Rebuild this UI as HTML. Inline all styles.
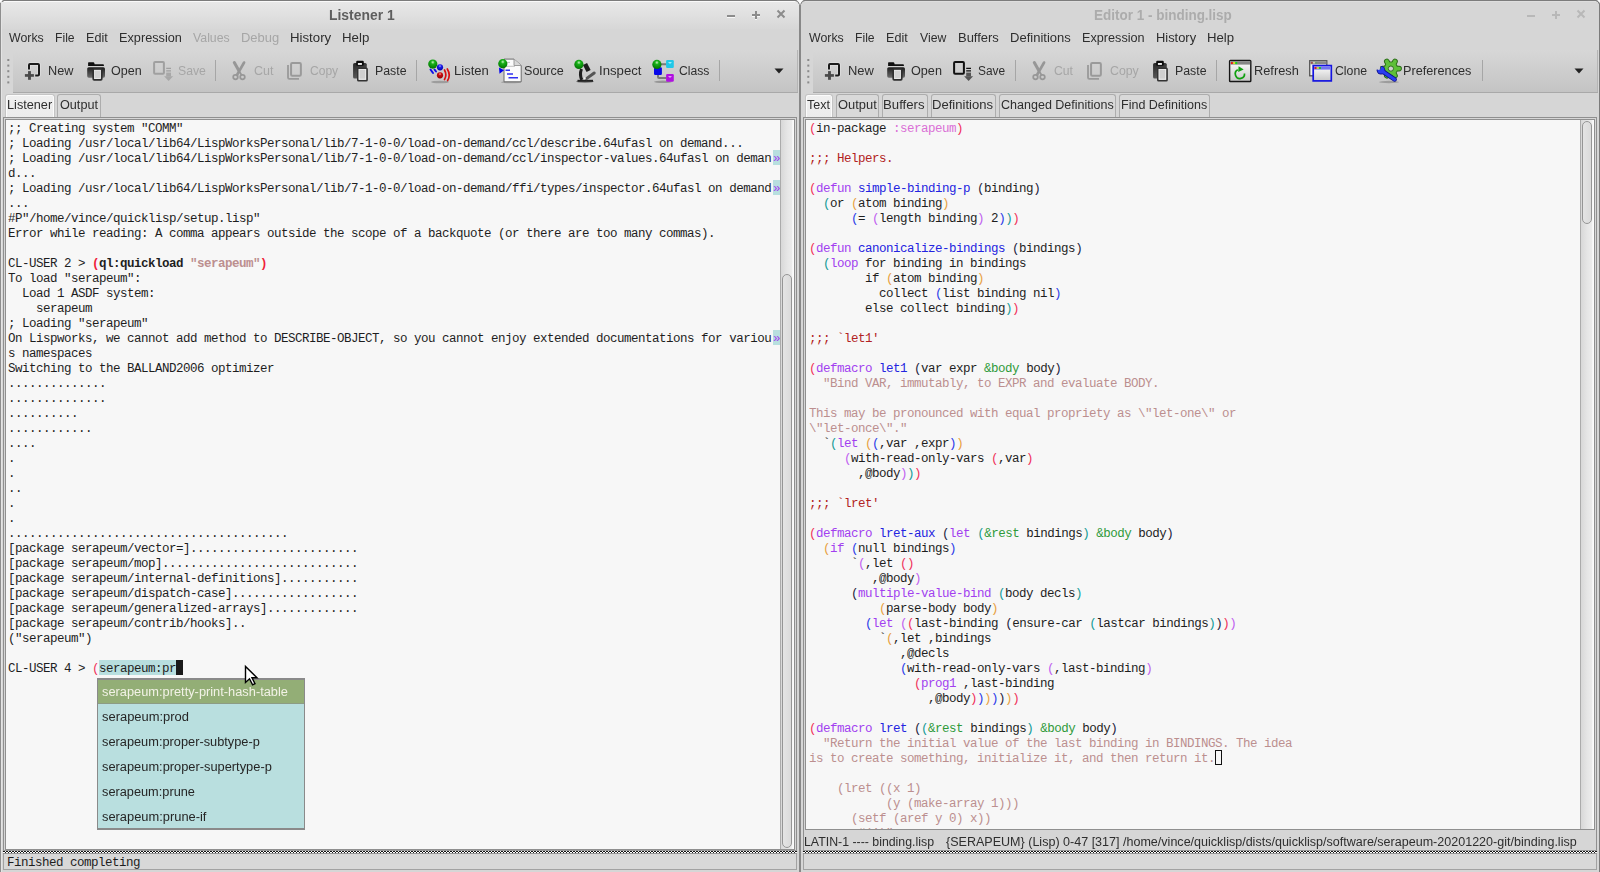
<!DOCTYPE html><html><head><meta charset="utf-8"><style>
html,body{margin:0;padding:0;width:1600px;height:872px;overflow:hidden;background:#d6d6d6;position:relative}
.abs,.ui,.tab,.code,.checker,.more,svg{position:absolute}
.ui{font-family:"Liberation Sans",sans-serif;white-space:pre;transform-origin:0 0}
.tab{top:94px;height:23.5px;box-sizing:border-box;border:1px solid #adadad;border-bottom:none;border-radius:3px 3px 0 0;background:#d9d9d9}
.tab.act{background:linear-gradient(#f0f0f0,#ebebeb);border-color:#c4c4c4;box-shadow:inset 1px 1px 0 #fbfbfb,inset -1px 0 0 #fbfbfb}
.code,.more{font-family:"Liberation Mono",monospace;font-size:12.5px;letter-spacing:-0.5px;line-height:15px;white-space:pre;color:#1e1e1e;overflow:hidden}
.more{color:#a040f0}
.checker{top:851px;height:2px;background:repeating-linear-gradient(90deg,#111 0 2px,#fff 2px 3px) 0 0/100% 1px no-repeat,repeating-linear-gradient(90deg,#fff 0 2px,#111 2px 3px) 0 1px/100% 1px no-repeat}
</style></head><body>
<div class="abs" style="left:0px;top:0px;width:1600px;height:872px;background:#d6d6d6;"></div>
<div class="abs" style="left:1px;top:1px;width:798px;height:28px;background:linear-gradient(#e9e9e9,#d7d7d7);"></div>
<div class="abs" style="left:1px;top:1px;width:797px;height:1px;background:#fafafa;"></div>
<div class="abs" style="left:801px;top:1px;width:798px;height:1px;background:#dedede;"></div>
<div class="abs" style="left:0px;top:0px;width:1600px;height:1px;background:#7c7c7c;"></div>
<div class="abs" style="left:0px;top:0px;width:1px;height:872px;background:#8e8e8e;"></div>
<div class="abs" style="left:799px;top:0px;width:2px;height:872px;background:#888888;"></div>
<div class="abs" style="left:1599px;top:0px;width:1px;height:872px;background:#7c7c7c;"></div>
<svg width="12" height="6" style="left:794px;top:0" viewBox="0 0 12 6"><path d="M1 0 Q4.6 0.3 5 4.2 H7 Q7.4 0.3 11 0 Z" fill="#fcfcfc"/><path d="M1 0.5 Q4.3 0.7 5.2 4 M6.8 4 Q7.7 0.7 11 0.5" fill="none" stroke="#7a7a7a" stroke-width="1"/></svg>
<svg width="6" height="6" style="left:0;top:0" viewBox="0 0 6 6"><path d="M0 0 H4 Q1 0.6 0 4 Z" fill="#fcfcfc"/><path d="M4.2 0.6 Q1.4 1 0.7 4" fill="none" stroke="#7a7a7a" stroke-width="1"/></svg>
<svg width="6" height="6" style="left:1594px;top:0" viewBox="0 0 6 6"><path d="M6 0 H2 Q5 0.6 6 4 Z" fill="#fcfcfc"/><path d="M1.8 0.6 Q4.6 1 5.3 4" fill="none" stroke="#7a7a7a" stroke-width="1"/></svg>
<div class="abs" style="left:1px;top:2px;width:1px;height:870px;background:#e4e4e4;"></div>
<div class="ui" style="left:328.71px;top:5.05px;font-size:14px;line-height:20px;color:#5e5e5e;transform:scaleX(0.9923);font-weight:bold;">Listener 1</div>
<div class="ui" style="left:1093.53px;top:5.05px;font-size:14px;line-height:20px;color:#acacac;transform:scaleX(0.9633);font-weight:bold;">Editor 1 - binding.lisp</div>
<svg width="70" height="30" style="left:722px;top:0" viewBox="0 0 70 30"><g fill="#fff" opacity="0.8" transform="translate(0,1)"><rect x="5" y="15" width="8" height="2"/><rect x="30" y="14" width="8" height="2"/><rect x="33" y="11" width="2" height="8"/></g><g fill="#8c8c8c"><rect x="5" y="15" width="8" height="2"/><rect x="30" y="14" width="8" height="2"/><rect x="33" y="11" width="2" height="8"/></g><g stroke="#8c8c8c" stroke-width="2"><path d="M55.5 10.5 L62.5 17.5 M62.5 10.5 L55.5 17.5"/></g></svg>
<svg width="70" height="30" style="left:1522px;top:0" viewBox="0 0 70 30"><g fill="#b8b8b8"><rect x="5" y="15" width="8" height="2"/><rect x="30" y="14" width="8" height="2"/><rect x="33" y="11" width="2" height="8"/></g><g stroke="#b8b8b8" stroke-width="2"><path d="M55.5 10.5 L62.5 17.5 M62.5 10.5 L55.5 17.5"/></g></svg>
<div class="ui" style="left:8.75px;top:28.44px;font-size:12px;line-height:20px;color:#2e2e2e;transform:scaleX(1.0284);">Works</div>
<div class="ui" style="left:55.24px;top:28.44px;font-size:12px;line-height:20px;color:#2e2e2e;transform:scaleX(1.0140);">File</div>
<div class="ui" style="left:86.45px;top:28.44px;font-size:12px;line-height:20px;color:#2e2e2e;transform:scaleX(1.0510);">Edit</div>
<div class="ui" style="left:119.19px;top:28.44px;font-size:12px;line-height:20px;color:#2e2e2e;transform:scaleX(1.0590);">Expression</div>
<div class="ui" style="left:193.10px;top:28.44px;font-size:12px;line-height:20px;color:#a6a6a6;transform:scaleX(1.0254);">Values</div>
<div class="ui" style="left:241.42px;top:28.44px;font-size:12px;line-height:20px;color:#a6a6a6;transform:scaleX(1.0789);">Debug</div>
<div class="ui" style="left:290.15px;top:28.44px;font-size:12px;line-height:20px;color:#2e2e2e;transform:scaleX(1.1019);">History</div>
<div class="ui" style="left:341.99px;top:28.44px;font-size:12px;line-height:20px;color:#2e2e2e;transform:scaleX(1.1056);">Help</div>
<div class="ui" style="left:808.75px;top:28.44px;font-size:12px;line-height:20px;color:#2e2e2e;transform:scaleX(1.0284);">Works</div>
<div class="ui" style="left:855.24px;top:28.44px;font-size:12px;line-height:20px;color:#2e2e2e;transform:scaleX(1.0140);">File</div>
<div class="ui" style="left:886.45px;top:28.44px;font-size:12px;line-height:20px;color:#2e2e2e;transform:scaleX(1.0510);">Edit</div>
<div class="ui" style="left:920.00px;top:28.44px;font-size:12px;line-height:20px;color:#2e2e2e;transform:scaleX(1.0174);">View</div>
<div class="ui" style="left:957.67px;top:28.44px;font-size:12px;line-height:20px;color:#2e2e2e;transform:scaleX(1.0810);">Buffers</div>
<div class="ui" style="left:1010.16px;top:28.44px;font-size:12px;line-height:20px;color:#2e2e2e;transform:scaleX(1.0852);">Definitions</div>
<div class="ui" style="left:1082.20px;top:28.44px;font-size:12px;line-height:20px;color:#2e2e2e;transform:scaleX(1.0547);">Expression</div>
<div class="ui" style="left:1155.68px;top:28.44px;font-size:12px;line-height:20px;color:#2e2e2e;transform:scaleX(1.0744);">History</div>
<div class="ui" style="left:1207.40px;top:28.44px;font-size:12px;line-height:20px;color:#2e2e2e;transform:scaleX(1.0991);">Help</div>
<div class="abs" style="left:13px;top:50px;width:785px;height:42px;background:linear-gradient(#d7d7d7,#c4c4c4);"></div>
<div class="abs" style="left:13px;top:92px;width:785px;height:1px;background:#a9a9a9;"></div>
<div class="abs" style="left:797px;top:50px;width:1px;height:42px;background:#b5b5b5;"></div>
<svg width="4" height="30" style="left:7px;top:58px"><rect x="0.3" y="1.0" width="2" height="2" fill="#8a8a8a"/><rect x="0.3" y="6.6" width="2" height="2" fill="#8a8a8a"/><rect x="0.3" y="12.2" width="2" height="2" fill="#8a8a8a"/><rect x="0.3" y="17.799999999999997" width="2" height="2" fill="#8a8a8a"/><rect x="0.3" y="23.4" width="2" height="2" fill="#8a8a8a"/></svg>
<div class="abs" style="left:813px;top:50px;width:785px;height:42px;background:linear-gradient(#d7d7d7,#c4c4c4);"></div>
<div class="abs" style="left:813px;top:92px;width:785px;height:1px;background:#a9a9a9;"></div>
<div class="abs" style="left:1597px;top:50px;width:1px;height:42px;background:#b5b5b5;"></div>
<svg width="4" height="30" style="left:807px;top:58px"><rect x="0.3" y="1.0" width="2" height="2" fill="#8a8a8a"/><rect x="0.3" y="6.6" width="2" height="2" fill="#8a8a8a"/><rect x="0.3" y="12.2" width="2" height="2" fill="#8a8a8a"/><rect x="0.3" y="17.799999999999997" width="2" height="2" fill="#8a8a8a"/><rect x="0.3" y="23.4" width="2" height="2" fill="#8a8a8a"/></svg>
<div class="ui" style="left:48.34px;top:60.74px;font-size:12px;line-height:20px;color:#2e2e2e;transform:scaleX(1.0587);">New</div>
<div class="ui" style="left:110.73px;top:60.74px;font-size:12px;line-height:20px;color:#2e2e2e;transform:scaleX(1.0445);">Open</div>
<div class="ui" style="left:177.59px;top:60.74px;font-size:12px;line-height:20px;color:#a6a6a6;transform:scaleX(1.0189);">Save</div>
<div class="ui" style="left:253.78px;top:60.74px;font-size:12px;line-height:20px;color:#a6a6a6;transform:scaleX(1.0389);">Cut</div>
<div class="ui" style="left:310.00px;top:60.74px;font-size:12px;line-height:20px;color:#a6a6a6;transform:scaleX(1.0036);">Copy</div>
<div class="ui" style="left:374.57px;top:60.74px;font-size:12px;line-height:20px;color:#2e2e2e;transform:scaleX(1.0274);">Paste</div>
<div class="ui" style="left:454.16px;top:60.74px;font-size:12px;line-height:20px;color:#2e2e2e;transform:scaleX(1.0877);">Listen</div>
<div class="ui" style="left:524.48px;top:60.74px;font-size:12px;line-height:20px;color:#2e2e2e;transform:scaleX(1.0473);">Source</div>
<div class="ui" style="left:599.39px;top:60.74px;font-size:12px;line-height:20px;color:#2e2e2e;transform:scaleX(1.0984);">Inspect</div>
<div class="ui" style="left:678.79px;top:60.74px;font-size:12px;line-height:20px;color:#2e2e2e;transform:scaleX(1.0121);">Class</div>
<div class="ui" style="left:848.42px;top:60.74px;font-size:12px;line-height:20px;color:#2e2e2e;transform:scaleX(1.0783);">New</div>
<div class="ui" style="left:910.87px;top:60.74px;font-size:12px;line-height:20px;color:#2e2e2e;transform:scaleX(1.0534);">Open</div>
<div class="ui" style="left:977.60px;top:60.74px;font-size:12px;line-height:20px;color:#2e2e2e;transform:scaleX(0.9924);">Save</div>
<div class="ui" style="left:1053.69px;top:60.74px;font-size:12px;line-height:20px;color:#a6a6a6;transform:scaleX(1.0167);">Cut</div>
<div class="ui" style="left:1109.58px;top:60.74px;font-size:12px;line-height:20px;color:#a6a6a6;transform:scaleX(1.0255);">Copy</div>
<div class="ui" style="left:1174.57px;top:60.74px;font-size:12px;line-height:20px;color:#2e2e2e;transform:scaleX(1.0274);">Paste</div>
<div class="ui" style="left:1254.18px;top:60.74px;font-size:12px;line-height:20px;color:#2e2e2e;transform:scaleX(1.0659);">Refresh</div>
<div class="ui" style="left:1334.64px;top:60.74px;font-size:12px;line-height:20px;color:#2e2e2e;transform:scaleX(1.0231);">Clone</div>
<div class="ui" style="left:1403.44px;top:60.74px;font-size:12px;line-height:20px;color:#2e2e2e;transform:scaleX(1.0569);">Preferences</div>
<svg width="28" height="26" style="left:20px;top:58px" viewBox="0 0 28 26"><path d="M9 11.5 V7 Q9 6 10 6 H18 Q19 6 19 7 V16.6 Q19 17.6 18 17.6 H15.2" fill="none" stroke="#e8e8e8" stroke-width="3.6" opacity="0.6"/><path d="M9 11.5 V7 Q9 6 10 6 H18 Q19 6 19 7 V16.6 Q19 17.6 18 17.6 H15.2" fill="none" stroke="#1a1a1a" stroke-width="2"/><rect x="4.9" y="16.1" width="9" height="2.7" fill="#4a4a4a"/><rect x="8.06" y="13.1" width="2.84" height="8.7" fill="#4a4a4a"/></svg>
<svg width="28" height="26" style="left:82px;top:58px" viewBox="0 0 28 26"><defs><linearGradient id="og" x1="0" y1="0" x2="0" y2="1"><stop offset="0" stop-color="#1c1c1c"/><stop offset="1" stop-color="#6a6a6a"/></linearGradient></defs><path d="M6.6 4.2 H11.5 Q12 4.2 12.3 5 L12.6 6.2 H21 Q21.9 6.2 21.9 7 V7.9 H6.1 V4.7 Z" fill="#0e0e0e"/><rect x="5.2" y="9.25" width="17.8" height="10.45" rx="1.6" fill="url(#og)"/><rect x="11.3" y="11" width="8.4" height="10.8" rx="0.8" fill="#d2d2d2" stroke="#2e2e2e" stroke-width="1.8"/><rect x="12.6" y="12.2" width="5.8" height="8.2" fill="none" stroke="#f0f0f0" stroke-width="0.7"/></svg>
<svg width="28" height="26" style="left:148px;top:58px" viewBox="0 0 28 26"><rect x="6.1" y="4" width="9.8" height="11.7" rx="1" fill="none" stroke="#a0a0a0" stroke-width="2"/><path d="M18.2 10.4 H23 M18.2 12.8 H23" stroke="#a0a0a0" stroke-width="1.3"/><rect x="18.2" y="14.6" width="4.8" height="3.8" fill="#a8a8a8"/><path d="M16.1 18.2 H25.1 L20.6 23 Z" fill="#a8a8a8"/></svg>
<div class="abs" style="left:215px;top:60px;width:1px;height:21px;background:#a6a6a6"></div>
<svg width="28" height="26" style="left:228px;top:58px" viewBox="0 0 28 26"><path d="M6.3 4.5 L10.5 12" stroke="#979797" stroke-width="3" stroke-linecap="round"/><path d="M16.1 4.5 L9 17" stroke="#979797" stroke-width="2.6" stroke-linecap="round"/><path d="M11 13 L13.5 17" stroke="#979797" stroke-width="1.8"/><circle cx="7.5" cy="19.1" r="2.3" fill="none" stroke="#979797" stroke-width="1.7"/><circle cx="14.5" cy="19.1" r="2.3" fill="none" stroke="#979797" stroke-width="1.7"/></svg>
<svg width="28" height="26" style="left:282px;top:58px" viewBox="0 0 28 26"><rect x="9.06" y="5" width="9.8" height="12.65" rx="1.2" fill="none" stroke="#9a9a9a" stroke-width="2"/><path d="M6 7 V19.5 Q6 20.8 7.3 20.8 H17" fill="none" stroke="#9a9a9a" stroke-width="1.8"/></svg>
<svg width="28" height="26" style="left:348px;top:58px" viewBox="0 0 28 26"><defs><linearGradient id="pg" x1="0" y1="0" x2="0.4" y2="1"><stop offset="0" stop-color="#262626"/><stop offset="1" stop-color="#5c5c5c"/></linearGradient></defs><rect x="5.07" y="4.9" width="13.73" height="15.7" rx="1.6" fill="url(#pg)"/><rect x="8.2" y="2.8" width="7.6" height="5" rx="1.2" fill="#0a0a0a"/><rect x="9.9" y="5" width="4" height="1.9" fill="#f4f4f4"/><rect x="9.8" y="10.3" width="9.25" height="12.4" rx="0.8" fill="#d0d0d0" stroke="#333" stroke-width="1.6"/><rect x="11.1" y="11.5" width="6.6" height="9.6" fill="none" stroke="#f0f0f0" stroke-width="0.7"/></svg>
<div class="abs" style="left:416px;top:60px;width:1px;height:21px;background:#a6a6a6"></div>
<svg width="30" height="30" style="left:424px;top:56px" viewBox="0 0 30 30"><ellipse cx="16" cy="26" rx="9" ry="1.3" fill="#000" opacity="0.22"/><path d="M6.5 13.5 L9 17 M10.5 13.5 L12 15.5" stroke="#1010e8" stroke-width="2" stroke-linecap="round"/><defs><radialGradient id="bl1" cx="0.5" cy="0.3" r="0.7"><stop offset="0" stop-color="#b0b0ff"/><stop offset="0.3" stop-color="#2020f0"/><stop offset="1" stop-color="#0000a0"/></radialGradient></defs><circle cx="16" cy="11.35" r="3.1" fill="url(#bl1)"/><defs><radialGradient id="bl2" cx="0.5" cy="0.3" r="0.7"><stop offset="0" stop-color="#ffb0b0"/><stop offset="0.3" stop-color="#d01010"/><stop offset="1" stop-color="#900000"/></radialGradient></defs><circle cx="16" cy="19.3" r="3.1" fill="url(#bl2)"/><path d="M20.5 14 Q23.2 19 20.5 23.5 M23.3 13 Q27 19 23.6 24.5" fill="none" stroke="#d81010" stroke-width="1.7" stroke-linecap="round"/><defs><radialGradient id="bl3" cx="0.5" cy="0.3" r="0.7"><stop offset="0" stop-color="#c8f5c0"/><stop offset="0.3" stop-color="#18b018"/><stop offset="1" stop-color="#007000"/></radialGradient></defs><circle cx="8.8" cy="8.1" r="4.6" fill="url(#bl3)"/></svg>
<svg width="30" height="30" style="left:494px;top:56px" viewBox="0 0 30 30"><ellipse cx="17" cy="26.3" rx="10" ry="1" fill="#000" opacity="0.2"/><path d="M10 3.1 H20 L27.2 9.5 V25.8 H10 Z" fill="#fbfbfb" stroke="#6a6a6a" stroke-width="1"/><path d="M20 3.1 V9.5 H27.2" fill="#d8d8d8" stroke="#888" stroke-width="0.8"/><path d="M12 6.4 H16 M12 10.3 H21" stroke="#b0b0b0" stroke-width="0.8"/><path d="M11.5 14.2 H16 M13 18 H19 M14.5 21.7 H24" stroke="#3030f0" stroke-width="1.6"/><path d="M5 11.5 L10 14.2 L5.5 17.8 Z" fill="#0000f0"/><defs><radialGradient id="bl4" cx="0.5" cy="0.3" r="0.7"><stop offset="0" stop-color="#c8f5c0"/><stop offset="0.3" stop-color="#18b018"/><stop offset="1" stop-color="#007000"/></radialGradient></defs><circle cx="8.8" cy="7.7" r="4.6" fill="url(#bl4)"/></svg>
<svg width="30" height="30" style="left:570px;top:56px" viewBox="0 0 30 30"><ellipse cx="15" cy="25.5" rx="9" ry="1.4" fill="#000" opacity="0.35"/><rect x="7.5" y="23.8" width="15.5" height="2" fill="#222"/><path d="M11.5 13 Q9.3 18.5 11.8 23.8" fill="none" stroke="#1e1e1e" stroke-width="3"/><path d="M15 8 L18.6 15" stroke="#1e1e1e" stroke-width="4.6"/><path d="M16.5 22.6 L24.2 17" stroke="#555" stroke-width="3" stroke-linecap="round"/><circle cx="14.8" cy="22.3" r="1" fill="#eee"/><defs><radialGradient id="bl5" cx="0.5" cy="0.3" r="0.7"><stop offset="0" stop-color="#c8f5c0"/><stop offset="0.3" stop-color="#18b018"/><stop offset="1" stop-color="#007000"/></radialGradient></defs><circle cx="8.9" cy="8.4" r="4.6" fill="url(#bl5)"/></svg>
<svg width="30" height="30" style="left:648px;top:56px" viewBox="0 0 30 30"><ellipse cx="15" cy="25.8" rx="9" ry="1.3" fill="#000" opacity="0.25"/><path d="M12 8.2 H18.5 M10 19 V21 Q10 22 11 22 H18.5" fill="none" stroke="#7a7a7a" stroke-width="2"/><rect x="18.1" y="4.1" width="7.7" height="7.8" rx="1.2" fill="#20c8e8"/><rect x="6" y="11.35" width="7.9" height="7.55" rx="1.2" fill="#0808e8"/><rect x="18.1" y="18.06" width="7.7" height="7.74" rx="1.2" fill="#b010e0"/><path d="M20 6 H24 L22 8 Z" fill="#c0f8ff" opacity="0.8"/><path d="M20 20 H24 L22 22 Z" fill="#f0c0ff" opacity="0.8"/><defs><radialGradient id="bl6" cx="0.5" cy="0.3" r="0.7"><stop offset="0" stop-color="#c8f5c0"/><stop offset="0.3" stop-color="#18b018"/><stop offset="1" stop-color="#007000"/></radialGradient></defs><circle cx="8.9" cy="8.4" r="4.6" fill="url(#bl6)"/></svg>
<div class="abs" style="left:719px;top:60px;width:1px;height:21px;background:#a6a6a6"></div>
<svg width="10" height="6" style="left:774px;top:68px"><path d="M0.5 0.5 H9.5 L5 5.5Z" fill="#222"/></svg>
<svg width="28" height="26" style="left:820px;top:58px" viewBox="0 0 28 26"><path d="M9 11.5 V7 Q9 6 10 6 H18 Q19 6 19 7 V16.6 Q19 17.6 18 17.6 H15.2" fill="none" stroke="#e8e8e8" stroke-width="3.6" opacity="0.6"/><path d="M9 11.5 V7 Q9 6 10 6 H18 Q19 6 19 7 V16.6 Q19 17.6 18 17.6 H15.2" fill="none" stroke="#1a1a1a" stroke-width="2"/><rect x="4.9" y="16.1" width="9" height="2.7" fill="#4a4a4a"/><rect x="8.06" y="13.1" width="2.84" height="8.7" fill="#4a4a4a"/></svg>
<svg width="28" height="26" style="left:882px;top:58px" viewBox="0 0 28 26"><defs><linearGradient id="og" x1="0" y1="0" x2="0" y2="1"><stop offset="0" stop-color="#1c1c1c"/><stop offset="1" stop-color="#6a6a6a"/></linearGradient></defs><path d="M6.6 4.2 H11.5 Q12 4.2 12.3 5 L12.6 6.2 H21 Q21.9 6.2 21.9 7 V7.9 H6.1 V4.7 Z" fill="#0e0e0e"/><rect x="5.2" y="9.25" width="17.8" height="10.45" rx="1.6" fill="url(#og)"/><rect x="11.3" y="11" width="8.4" height="10.8" rx="0.8" fill="#d2d2d2" stroke="#2e2e2e" stroke-width="1.8"/><rect x="12.6" y="12.2" width="5.8" height="8.2" fill="none" stroke="#f0f0f0" stroke-width="0.7"/></svg>
<svg width="28" height="26" style="left:948px;top:58px" viewBox="0 0 28 26"><rect x="6.1" y="4" width="9.8" height="11.7" rx="1" fill="none" stroke="#111" stroke-width="2"/><path d="M18.2 10.4 H23 M18.2 12.8 H23" stroke="#111" stroke-width="1.3"/><rect x="18.2" y="14.6" width="4.8" height="3.8" fill="#555"/><path d="M16.1 18.2 H25.1 L20.6 23 Z" fill="#555"/></svg>
<div class="abs" style="left:1015px;top:60px;width:1px;height:21px;background:#a6a6a6"></div>
<svg width="28" height="26" style="left:1028px;top:58px" viewBox="0 0 28 26"><path d="M6.3 4.5 L10.5 12" stroke="#979797" stroke-width="3" stroke-linecap="round"/><path d="M16.1 4.5 L9 17" stroke="#979797" stroke-width="2.6" stroke-linecap="round"/><path d="M11 13 L13.5 17" stroke="#979797" stroke-width="1.8"/><circle cx="7.5" cy="19.1" r="2.3" fill="none" stroke="#979797" stroke-width="1.7"/><circle cx="14.5" cy="19.1" r="2.3" fill="none" stroke="#979797" stroke-width="1.7"/></svg>
<svg width="28" height="26" style="left:1082px;top:58px" viewBox="0 0 28 26"><rect x="9.06" y="5" width="9.8" height="12.65" rx="1.2" fill="none" stroke="#9a9a9a" stroke-width="2"/><path d="M6 7 V19.5 Q6 20.8 7.3 20.8 H17" fill="none" stroke="#9a9a9a" stroke-width="1.8"/></svg>
<svg width="28" height="26" style="left:1148px;top:58px" viewBox="0 0 28 26"><defs><linearGradient id="pg" x1="0" y1="0" x2="0.4" y2="1"><stop offset="0" stop-color="#262626"/><stop offset="1" stop-color="#5c5c5c"/></linearGradient></defs><rect x="5.07" y="4.9" width="13.73" height="15.7" rx="1.6" fill="url(#pg)"/><rect x="8.2" y="2.8" width="7.6" height="5" rx="1.2" fill="#0a0a0a"/><rect x="9.9" y="5" width="4" height="1.9" fill="#f4f4f4"/><rect x="9.8" y="10.3" width="9.25" height="12.4" rx="0.8" fill="#d0d0d0" stroke="#333" stroke-width="1.6"/><rect x="11.1" y="11.5" width="6.6" height="9.6" fill="none" stroke="#f0f0f0" stroke-width="0.7"/></svg>
<div class="abs" style="left:1216px;top:60px;width:1px;height:21px;background:#a6a6a6"></div>
<svg width="30" height="30" style="left:1225px;top:56px" viewBox="0 0 30 30"><defs><linearGradient id="rg" x1="0" y1="0" x2="0" y2="1"><stop offset="0" stop-color="#fff"/><stop offset="1" stop-color="#c8c8c8"/></linearGradient></defs><rect x="4.6" y="4.4" width="21.2" height="21.1" rx="0.8" fill="url(#rg)" stroke="#151515" stroke-width="1.4"/><rect x="5.3" y="5.1" width="19.8" height="3.5" fill="#858585"/><circle cx="6.9" cy="7.1" r="1.1" fill="#f01010"/><circle cx="9.1" cy="7.1" r="1.1" fill="#e8e810"/><circle cx="11.3" cy="7.1" r="1.1" fill="#10e010"/><path d="M12.8 13.8 A4.6 4.6 0 1 0 19.5 17.5" fill="none" stroke="#10a010" stroke-width="1.7"/><path d="M13.6 10.3 L18.7 13.5 L13.2 16 Z" fill="#10a010"/></svg>
<svg width="30" height="30" style="left:1305px;top:56px" viewBox="0 0 30 30"><defs><linearGradient id="cg" x1="0" y1="0" x2="0" y2="1"><stop offset="0" stop-color="#fff"/><stop offset="1" stop-color="#c8c8c8"/></linearGradient></defs><rect x="4.7" y="4.7" width="17.1" height="15.1" fill="#f2f2f2" stroke="#555" stroke-width="1.3"/><rect x="5.3" y="5.3" width="16" height="3" fill="#8a8a8a"/><circle cx="6.8" cy="6.8" r="1" fill="#a05050"/><circle cx="9" cy="6.8" r="1" fill="#d8d8b0"/><circle cx="11.2" cy="6.8" r="1" fill="#70a070"/><rect x="8.2" y="9.6" width="18.1" height="15.3" fill="url(#cg)" stroke="#1414e0" stroke-width="1.7"/><rect x="9" y="10.4" width="16.5" height="3.2" fill="#7474f0"/><circle cx="10.5" cy="12" r="1.1" fill="#f01010"/><circle cx="12.8" cy="12" r="1.1" fill="#e8e810"/><circle cx="15" cy="12" r="1.1" fill="#10d010"/></svg>
<svg width="30" height="30" style="left:1374px;top:56px" viewBox="0 0 30 30"><defs><mask id="wm" maskUnits="userSpaceOnUse" x="0" y="0" width="30" height="30"><rect x="0" y="0" width="30" height="30" fill="#fff"/><circle cx="4.6" cy="11.6" r="2.3" fill="#000"/></mask></defs><ellipse cx="15" cy="26" rx="10" ry="1.2" fill="#000" opacity="0.22"/><path d="M16.90 12.60 L12.80 5.50 M16.90 12.60 L21.00 5.50 M16.90 12.60 L25.10 12.60 M16.90 12.60 L21.00 19.70 M16.90 12.60 L12.80 19.70 M16.90 12.60 L8.70 12.60 " stroke="#2a6a18" stroke-width="5.6" stroke-linecap="round"/><circle cx="16.9" cy="12.6" r="7.2" fill="#2a6a18"/><path d="M16.90 12.60 L12.80 5.50 M16.90 12.60 L21.00 5.50 M16.90 12.60 L25.10 12.60 M16.90 12.60 L21.00 19.70 M16.90 12.60 L12.80 19.70 M16.90 12.60 L8.70 12.60 " stroke="#5fc03a" stroke-width="3.8" stroke-linecap="round"/><circle cx="16.9" cy="12.6" r="6.3" fill="#5fc03a"/><circle cx="16.9" cy="12.6" r="2.6" fill="#d0d0d0" stroke="#2a6a18" stroke-width="0.9"/><g mask="url(#wm)"><path d="M9.5 16 L20.6 23.4" stroke="#10108a" stroke-width="4.6" stroke-linecap="round"/><circle cx="7" cy="14.2" r="4.3" fill="#10108a"/><path d="M9.5 16 L20.6 23.4" stroke="#2a3ef0" stroke-width="3.0" stroke-linecap="round"/><circle cx="7" cy="14.2" r="3.4" fill="#2a3ef0"/></g></svg>
<div class="abs" style="left:1482px;top:60px;width:1px;height:21px;background:#a6a6a6"></div>
<svg width="10" height="6" style="left:1574px;top:68px"><path d="M0.5 0.5 H9.5 L5 5.5Z" fill="#222"/></svg>
<div class="tab act" style="left:4.5px;width:50.0px"></div>
<div class="ui" style="left:6.64px;top:95.24px;font-size:12px;line-height:20px;color:#2e2e2e;transform:scaleX(1.0578);">Listener</div>
<div class="tab" style="left:57.0px;width:43.5px"></div>
<div class="ui" style="left:60.07px;top:95.24px;font-size:12px;line-height:20px;color:#2e2e2e;transform:scaleX(1.0535);">Output</div>
<div class="tab act" style="left:804.5px;width:28.0px"></div>
<div class="ui" style="left:807.04px;top:95.24px;font-size:12px;line-height:20px;color:#2e2e2e;transform:scaleX(1.0436);">Text</div>
<div class="tab" style="left:835.5px;width:43.0px"></div>
<div class="ui" style="left:837.56px;top:95.24px;font-size:12px;line-height:20px;color:#2e2e2e;transform:scaleX(1.0746);">Output</div>
<div class="tab" style="left:881.5px;width:46.0px"></div>
<div class="ui" style="left:883.30px;top:95.24px;font-size:12px;line-height:20px;color:#2e2e2e;transform:scaleX(1.0989);">Buffers</div>
<div class="tab" style="left:930.5px;width:65.0px"></div>
<div class="ui" style="left:932.01px;top:95.24px;font-size:12px;line-height:20px;color:#2e2e2e;transform:scaleX(1.0879);">Definitions</div>
<div class="tab" style="left:998.6px;width:117.9px"></div>
<div class="ui" style="left:1000.87px;top:95.24px;font-size:12px;line-height:20px;color:#2e2e2e;transform:scaleX(1.0439);">Changed Definitions</div>
<div class="tab" style="left:1119.4px;width:90.6px"></div>
<div class="ui" style="left:1121.16px;top:95.24px;font-size:12px;line-height:20px;color:#2e2e2e;transform:scaleX(1.0431);">Find Definitions</div>
<div class="abs" style="left:3px;top:117px;width:794px;height:735px;box-sizing:border-box;border:1px solid #8f8f8f;"></div>
<div class="abs" style="left:5px;top:119px;width:790px;height:731px;box-sizing:border-box;border:1px solid #8f8f8f;background:#fff"></div>
<div class="abs" style="left:6px;top:120px;width:788px;height:729px;background:#f7f7f7;"></div>
<div class="abs" style="left:803px;top:117px;width:794px;height:735px;box-sizing:border-box;border:1px solid #8f8f8f;"></div>
<div class="abs" style="left:805px;top:119px;width:790px;height:711px;box-sizing:border-box;border:1px solid #8f8f8f;background:#fff"></div>
<div class="abs" style="left:806px;top:120px;width:788px;height:709px;background:#f7f7f7;"></div>
<div class="abs" style="left:773px;top:150px;width:7px;height:15px;background:#b8dfdf;"></div>
<div class="abs" style="left:773px;top:180px;width:7px;height:15px;background:#b8dfdf;"></div>
<div class="abs" style="left:773px;top:330px;width:7px;height:15px;background:#b8dfdf;"></div>
<div class="abs" style="left:99px;top:660px;width:77px;height:15px;background:#b8dfdf;"></div>
<div class="code" style="left:8px;top:122px;width:772px;height:726px">;; Creating system "COMM"
; Loading /usr/local/lib64/LispWorksPersonal/lib/7-1-0-0/load-on-demand/ccl/describe.64ufasl on demand...
; Loading /usr/local/lib64/LispWorksPersonal/lib/7-1-0-0/load-on-demand/ccl/inspector-values.64ufasl on deman
d...
; Loading /usr/local/lib64/LispWorksPersonal/lib/7-1-0-0/load-on-demand/ffi/types/inspector.64ufasl on demand
...
#P"/home/vince/quicklisp/setup.lisp"
Error while reading: A comma appears outside the scope of a backquote (or there are too many commas).

CL-USER 2 &gt; <b><span style="color:#f0203a">(</span>ql:quickload <span style="color:#bc8f8f">"serapeum"</span><span style="color:#f0203a">)</span></b>
To load "serapeum":
  Load 1 ASDF system:
    serapeum
; Loading "serapeum"
On Lispworks, we cannot add method to DESCRIBE-OBJECT, so you cannot enjoy extended documentations for variou
s namespaces
Switching to the BALLAND2006 optimizer
..............
..............
..........
............
....
.
.
..
.
.
........................................
[package serapeum/vector=]........................
[package serapeum/mop]............................
[package serapeum/internal-definitions]...........
[package serapeum/dispatch-case]..................
[package serapeum/generalized-arrays].............
[package serapeum/contrib/hooks]..
("serapeum")

CL-USER 4 &gt; <span style="color:#f0305a">(</span>serapeum:pr</div>
<div class="more" style="left:773px;top:152px">&raquo;</div><div class="more" style="left:773px;top:182px">&raquo;</div><div class="more" style="left:773px;top:332px">&raquo;</div>
<div class="abs" style="left:176px;top:660px;width:7px;height:15px;background:#1a1a1a;"></div>
<div class="abs" style="left:780px;top:120px;width:14px;height:729px;background:linear-gradient(90deg,#d8d8d8,#e6e6e6 50%,#ececec 85%,#fbfbfb 90%);border-left:1px solid #ababab;box-sizing:border-box"></div><div class="abs" style="left:782px;top:274px;width:10px;height:574px;border:1px solid #959595;border-radius:5px;background:linear-gradient(90deg,#e4e4e4,#dadada);box-sizing:border-box"></div>
<div class="code" style="left:809px;top:122px;width:771px;height:707px"><span style="color:#f0305a">(</span>in-package <span style="color:#da70d6">:serapeum</span><span style="color:#f0305a">)</span>

<span style="color:#b22222">;;; Helpers.</span>

<span style="color:#f0305a">(</span><span style="color:#a23ff0">defun</span> <span style="color:#2323e0">simple-binding-p</span> <span style="color:#1c2240">(</span>binding<span style="color:#1c2240">)</span>
  <span style="color:#139a96">(</span>or <span style="color:#e8a040">(</span>atom binding<span style="color:#e8a040">)</span>
      <span style="color:#2a3ae8">(</span>= <span style="color:#c060f0">(</span>length binding<span style="color:#c060f0">)</span> 2<span style="color:#2a3ae8">)</span><span style="color:#139a96">)</span><span style="color:#f0305a">)</span>

<span style="color:#f0305a">(</span><span style="color:#a23ff0">defun</span> <span style="color:#2323e0">canonicalize-bindings</span> <span style="color:#1c2240">(</span>bindings<span style="color:#1c2240">)</span>
  <span style="color:#139a96">(</span><span style="color:#a23ff0">loop</span> for binding in bindings
        if <span style="color:#e8a040">(</span>atom binding<span style="color:#e8a040">)</span>
          collect <span style="color:#2a3ae8">(</span>list binding nil<span style="color:#2a3ae8">)</span>
        else collect binding<span style="color:#139a96">)</span><span style="color:#f0305a">)</span>

<span style="color:#b22222">;;; `let1'</span>

<span style="color:#f0305a">(</span><span style="color:#a23ff0">defmacro</span> <span style="color:#2323e0">let1</span> <span style="color:#1c2240">(</span>var expr <span style="color:#2f9a3a">&amp;body</span> body<span style="color:#1c2240">)</span>
  <span style="color:#bc8f8f">"Bind VAR, immutably, to EXPR and evaluate BODY.</span>

<span style="color:#bc8f8f">This may be pronounced with equal propriety as \"let-one\" or</span>
<span style="color:#bc8f8f">\"let-once\"."</span>
  `<span style="color:#139a96">(</span><span style="color:#a23ff0">let</span> <span style="color:#e8a040">(</span><span style="color:#2a3ae8">(</span>,var ,expr<span style="color:#2a3ae8">)</span><span style="color:#e8a040">)</span>
     <span style="color:#c060f0">(</span>with-read-only-vars <span style="color:#f0305a">(</span>,var<span style="color:#f0305a">)</span>
       ,@body<span style="color:#c060f0">)</span><span style="color:#139a96">)</span><span style="color:#f0305a">)</span>

<span style="color:#b22222">;;; `lret'</span>

<span style="color:#f0305a">(</span><span style="color:#a23ff0">defmacro</span> <span style="color:#2323e0">lret-aux</span> <span style="color:#1c2240">(</span><span style="color:#a23ff0">let</span> <span style="color:#139a96">(</span><span style="color:#2f9a3a">&amp;rest</span> bindings<span style="color:#139a96">)</span> <span style="color:#2f9a3a">&amp;body</span> body<span style="color:#1c2240">)</span>
  <span style="color:#e8a040">(</span><span style="color:#a23ff0">if</span> <span style="color:#2a3ae8">(</span>null bindings<span style="color:#2a3ae8">)</span>
      `<span style="color:#c060f0">(</span>,let <span style="color:#f0305a">(</span><span style="color:#f0305a">)</span>
         ,@body<span style="color:#c060f0">)</span>
      <span style="color:#1c2240">(</span><span style="color:#a23ff0">multiple-value-bind</span> <span style="color:#139a96">(</span>body decls<span style="color:#139a96">)</span>
          <span style="color:#e8a040">(</span>parse-body body<span style="color:#e8a040">)</span>
        <span style="color:#2a3ae8">(</span><span style="color:#a23ff0">let</span> <span style="color:#c060f0">(</span><span style="color:#f0305a">(</span>last-binding <span style="color:#1c2240">(</span>ensure-car <span style="color:#139a96">(</span>lastcar bindings<span style="color:#139a96">)</span><span style="color:#1c2240">)</span><span style="color:#f0305a">)</span><span style="color:#c060f0">)</span>
          `<span style="color:#e8a040">(</span>,let ,bindings
             ,@decls
             <span style="color:#2a3ae8">(</span>with-read-only-vars <span style="color:#c060f0">(</span>,last-binding<span style="color:#c060f0">)</span>
               <span style="color:#f0305a">(</span><span style="color:#a23ff0">prog1</span> ,last-binding
                 ,@body<span style="color:#f0305a">)</span><span style="color:#2a3ae8">)</span><span style="color:#e8a040">)</span><span style="color:#2a3ae8">)</span><span style="color:#1c2240">)</span><span style="color:#e8a040">)</span><span style="color:#f0305a">)</span>

<span style="color:#f0305a">(</span><span style="color:#a23ff0">defmacro</span> <span style="color:#2323e0">lret</span> <span style="color:#1c2240">(</span><span style="color:#139a96">(</span><span style="color:#2f9a3a">&amp;rest</span> bindings<span style="color:#139a96">)</span> <span style="color:#2f9a3a">&amp;body</span> body<span style="color:#1c2240">)</span>
  <span style="color:#bc8f8f">"Return the initial value of the last binding in BINDINGS. The idea</span>
<span style="color:#bc8f8f">is to create something, initialize it, and then return it.</span>

<span style="color:#bc8f8f">    (lret ((x 1)</span>
<span style="color:#bc8f8f">           (y (make-array 1)))</span>
<span style="color:#bc8f8f">      (setf (aref y 0) x))</span>
<span style="color:#bc8f8f">       #(1)"</span></div>
<div class="abs" style="left:1215px;top:750px;width:7px;height:15px;box-sizing:border-box;border:1px solid #111;border-width:1.5px"></div>
<div class="abs" style="left:1580px;top:120px;width:14px;height:709px;background:linear-gradient(90deg,#d8d8d8,#e6e6e6 50%,#ececec 85%,#fbfbfb 90%);border-left:1px solid #ababab;box-sizing:border-box"></div><div class="abs" style="left:1582px;top:121px;width:10px;height:103px;border:1px solid #959595;border-radius:5px;background:linear-gradient(90deg,#e4e4e4,#dadada);box-sizing:border-box"></div>
<div class="abs" style="left:3px;top:853px;width:794px;height:17px;box-sizing:border-box;border:1px solid #a2a2a2;background:#d8d8d8"></div>
<div class="abs" style="left:3px;top:850px;width:794px;height:1px;background:#9a9a9a;"></div>
<div class="abs" style="left:3px;top:853px;width:794px;height:1px;background:#959595;"></div>
<div class="checker" style="left:3px;width:794px"></div>
<div class="abs" style="left:803px;top:853px;width:794px;height:17px;box-sizing:border-box;border:1px solid #a2a2a2;background:#d8d8d8"></div>
<div class="abs" style="left:803px;top:850px;width:794px;height:1px;background:#9a9a9a;"></div>
<div class="abs" style="left:803px;top:853px;width:794px;height:1px;background:#959595;"></div>
<div class="checker" style="left:803px;width:794px"></div>
<div class="abs" style="left:5px;top:849px;width:790px;height:1px;background:#8f8f8f;"></div>
<div class="code" style="left:7px;top:856px;overflow:visible">Finished completing</div>
<div class="ui" style="left:804.47px;top:831.64px;font-size:12px;line-height:20px;color:#2e2e2e;transform:scaleX(1.0280);">LATIN-1 ---- binding.lisp</div>
<div class="ui" style="left:945.79px;top:831.64px;font-size:12px;line-height:20px;color:#2e2e2e;transform:scaleX(1.0448);">{SERAPEUM} (Lisp) 0-47 [317] /home/vince/quicklisp/dists/quicklisp/software/serapeum-20201220-git/binding.lisp</div>
<div class="abs" style="left:97px;top:678px;width:208px;height:152px;background:#8a8a8a;"></div>
<div class="abs" style="left:98px;top:680px;width:206px;height:148px;background:#b9dfdf;"></div>
<div class="abs" style="left:98px;top:680px;width:206px;height:23px;background:#93ae76;"></div>
<div class="abs" style="left:98px;top:703px;width:206px;height:1px;background:#8c9c84;"></div>
<div class="ui" style="left:101.88px;top:681.64px;font-size:12px;line-height:20px;color:#f2f2e6;transform:scaleX(1.0681);">serapeum:pretty-print-hash-table</div>
<div class="ui" style="left:101.88px;top:706.64px;font-size:12px;line-height:20px;color:#262626;transform:scaleX(1.0779);">serapeum:prod</div>
<div class="ui" style="left:101.88px;top:731.64px;font-size:12px;line-height:20px;color:#262626;transform:scaleX(1.0659);">serapeum:proper-subtype-p</div>
<div class="ui" style="left:101.88px;top:756.64px;font-size:12px;line-height:20px;color:#262626;transform:scaleX(1.0696);">serapeum:proper-supertype-p</div>
<div class="ui" style="left:101.88px;top:781.64px;font-size:12px;line-height:20px;color:#262626;transform:scaleX(1.0635);">serapeum:prune</div>
<div class="ui" style="left:101.88px;top:806.64px;font-size:12px;line-height:20px;color:#262626;transform:scaleX(1.0721);">serapeum:prune-if</div>
<svg width="16" height="22" style="left:243px;top:664px" viewBox="0 0 16 22"><path d="M2.5 2.5 V18.5 L6.5 14.8 L9.6 20.8 L12 19.6 L9 13.8 H14Z" fill="#fff" stroke="#000" stroke-width="1.4" stroke-linejoin="miter"/></svg>
</body></html>
